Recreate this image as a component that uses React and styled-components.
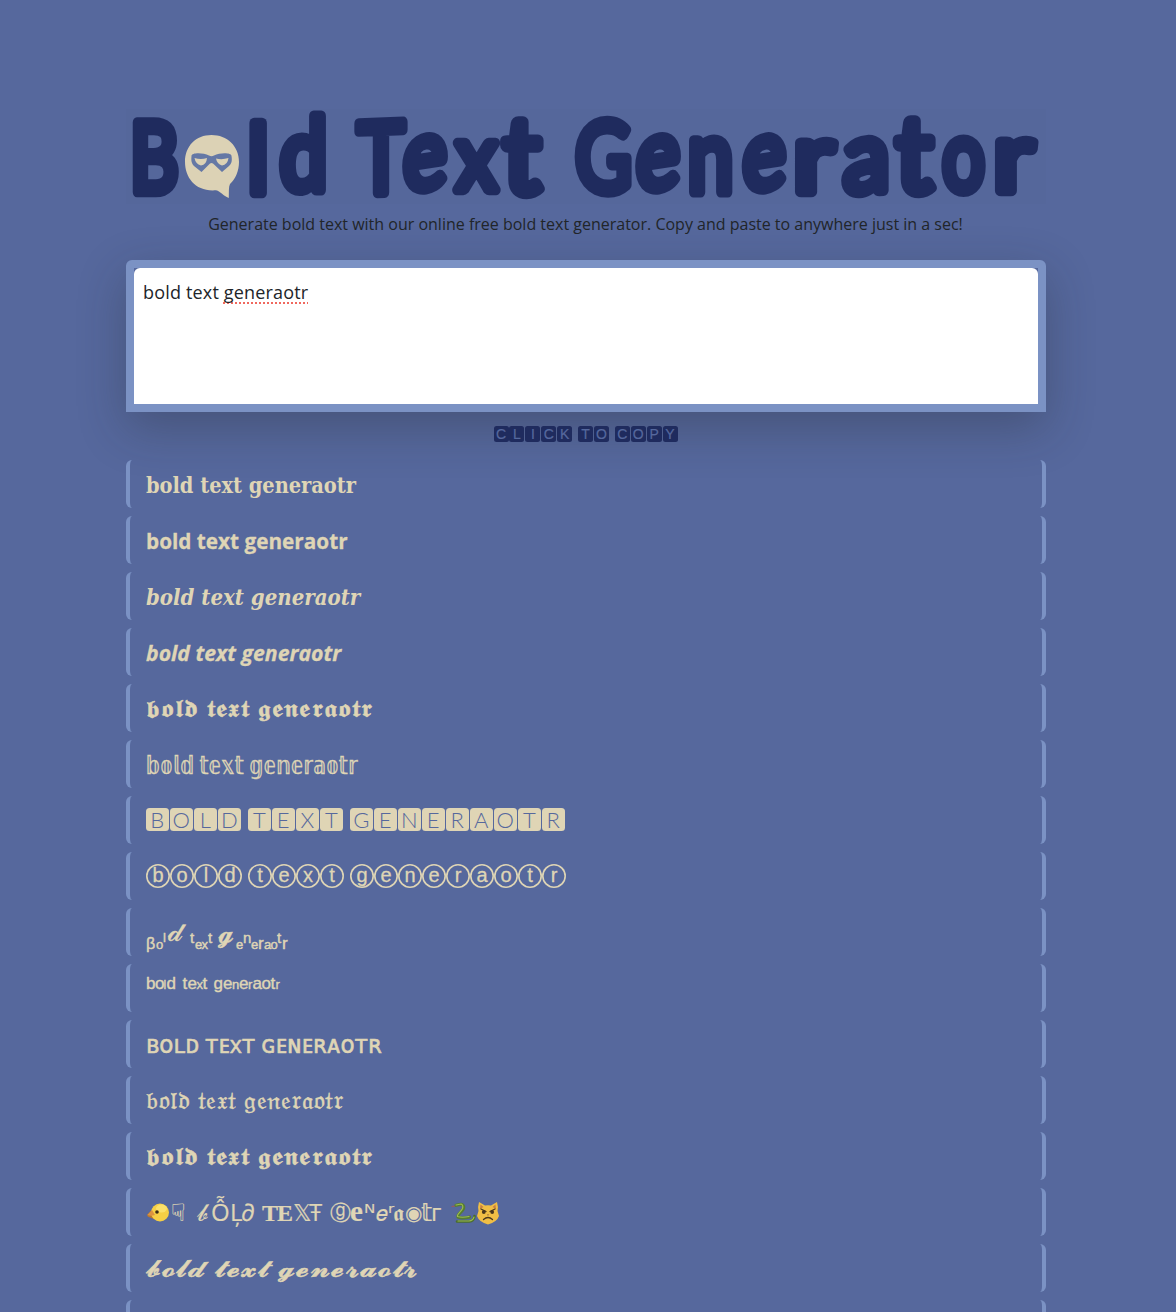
import React from "react";
import styled, { createGlobalStyle } from "styled-components";

const GlobalStyle = createGlobalStyle`
  * { box-sizing: border-box; }
  html, body { margin: 0; padding: 0; }
  body {
    background: #56689d;
    font-family: "Open Sans", "Noto Sans", "DejaVu Sans", sans-serif;
    height: 1312px;
    overflow: hidden;
  }
`;

const Page = styled.main`
  width: 920px;
  margin: 0 0 0 126px;
  padding-top: 109px;
`;

const Banner = styled.h1`
  margin: 0;
  height: 95px;
  background: #55679b;
`;

const BannerArt = styled.svg`
  display: block;
  overflow: visible;
`;

const Tagline = styled.p`
  margin: 8px 1px 0 0;
  height: 24px;
  line-height: 24px;
  font-size: 16px;
  text-align: center;
  color: #212529;
  white-space: nowrap;
`;

const InputFrame = styled.div`
  height: 152px;
  margin-top: 24px;
  border: 8px solid #7b92c4;
  border-radius: 6px 6px 0 0;
  box-shadow: 0 16px 48px rgba(33, 37, 41, 0.3);
`;

const InputArea = styled.div`
  height: 136px;
  padding: 11px 9px;
  background: #fff;
  border-radius: 6px 6px 0 0;
  font-size: 18px;
  letter-spacing: 0.17px;
  line-height: 27px;
  color: #212529;
`;

const Misspelled = styled.span`
  text-decoration: underline dotted #f0685e 2px;
  text-decoration-skip-ink: none;
  text-underline-offset: 3px;
`;

const Hint = styled.div`
  display: flex;
  justify-content: center;
  gap: 5px;
  height: 48px;
  padding-top: 14px;
`;

const Word = styled.span`
  display: flex;
`;

const HintTile = styled.span`
  width: 15px;
  height: 16px;
  margin-right: 0.9px;
  border-radius: 2.5px;
  background: #1f2b5e;
  color: #56689d;
  font: 400 14px/16px "Liberation Sans", sans-serif;
  -webkit-text-stroke: 0.2px #56689d;
  text-align: center;
`;

const List = styled.div`
  display: flex;
  flex-direction: column;
  gap: 8px;
`;

const Row = styled.div`
  height: 48px;
  flex: none;
  padding: 0 16px;
  border: solid #7b92c4;
  border-width: 0 4px;
  border-radius: 6px;
  display: flex;
  align-items: flex-start;
`;

const Sample = styled.span`
  display: block;
  white-space: pre;
  color: #dfd5b5;
  line-height: 48px;
  font-family: ${(p) => p.$font || '"Open Sans", "DejaVu Sans", sans-serif'};
  font-size: ${(p) => p.$size || 24}px;
  font-weight: ${(p) => p.$weight || 400};
  font-style: ${(p) => (p.$italic ? "italic" : "normal")};
  letter-spacing: ${(p) => p.$track || 0}px;
  margin-top: ${(p) => p.$drop || 0}px;
  -webkit-text-stroke: ${(p) => p.$stroke || 0}px #dfd5b5;
  transform: scaleX(${(p) => p.$stretch || 1});
  transform-origin: left center;
`;

const Part = styled.span`
  display: inline-block;
  line-height: 1;
  width: ${(p) => p.$width}px;
  font-size: ${(p) => p.$size}px;
  vertical-align: ${(p) => p.$rise}px;
  ${(p) => p.$serif && 'font-family: "Liberation Serif", serif; font-weight: 700;'}
`;

const Emoji = styled.svg`
  width: 24px;
  height: 24px;
  overflow: visible;
`;

const TileLine = styled.div`
  display: flex;
  gap: 6px;
  padding-top: 12px;
`;

const SquareTile = styled.span`
  width: 22.5px;
  height: 22.5px;
  margin-right: 1.5px;
  border-radius: 3.5px;
  background: #dfd5b5;
  color: #56689d;
  font: 300 22px/23px Lato, sans-serif;
  text-align: center;
`;

const RoundTile = styled.span`
  width: 24px;
  height: 24px;
  box-shadow: inset 0 0 0 1.6px #dfd5b5;
  border-radius: 50%;
  color: #dfd5b5;
  font: 400 20px/22px "Liberation Sans", sans-serif;
  -webkit-text-stroke: 0.3px #dfd5b5;
  text-align: center;
`;

/* glyph, left, top, right, bottom, slant of the horizontals in degrees */
const LETTERS = [
  ["B", 132.5, 115, 179, 197, 0],
  ["l", 249, 117, 267.5, 198, 0],
  ["d", 278.5, 110.5, 326, 197, 0],
  ["T", 354, 116, 408, 198, -2],
  ["e", 402, 132, 448, 195, -9],
  ["x", 452, 136, 501, 195, 0],
  ["t", 500, 116, 545, 199.5, 0],
  ["G", 574, 115, 632, 198, 0],
  ["e", 635, 132, 681, 195, -9],
  ["n", 689, 134, 733, 198, 0],
  ["e", 741.5, 132, 787, 195, -9],
  ["r", 795, 136, 839.5, 197, 0],
  ["a", 841, 133.5, 889.5, 198, -3],
  ["t", 892.5, 116, 937, 199, 0],
  ["o", 941, 133, 986, 197.5, 0],
  ["r", 995, 136, 1039, 196.5, 0],
];

const STROKE = 11;
const pen = document.createElement("canvas").getContext("2d");

function glyphTransform([char, left, top, right, bottom, slant]) {
  pen.font = "400 100px Lato";
  const m = pen.measureText(char);
  const x = -m.actualBoundingBoxLeft;
  const w = m.actualBoundingBoxRight - x;
  const h = m.actualBoundingBoxAscent + m.actualBoundingBoxDescent;
  const sx = (right - left) / (w + STROKE);
  const sy = (bottom - top) / (h + STROKE);
  const tx = left - 126 + (STROKE / 2 - x) * sx;
  const ty = top - 109 + (STROKE / 2 + m.actualBoundingBoxAscent) * sy;
  const cx = (left + right) / 2 - 126;
  return `translate(${cx} 0) skewY(${slant}) translate(${tx - cx} ${ty}) scale(${sx} ${sy})`;
}

const LogoLetter = styled.text`
  font: 400 100px Lato, sans-serif;
  fill: #1f2b5e;
  stroke: #1f2b5e;
  stroke-width: ${STROKE}px;
  stroke-linejoin: round;
`;

function Logo() {
  return (
    <BannerArt width="920" height="95" viewBox="0 0 920 95">
      {LETTERS.map((l, i) => (
        <LogoLetter key={i} transform={glyphTransform(l)}>{l[0]}</LogoLetter>
      ))}
      <path fill="#dcd2b5" d="M85.5 26C101 26 113 37 113 53C113 62 109.500 70 104 75C102.500 78 103 83 102.800 89C97 87 95 82.500 90 81.300C70 83 59 69 59 53C59 37 70 26 85.500 26Z" />
      <path fill="#6578a5" d="M65.500 47C65.500 43.500 77 43.500 83 46.500Q85.500 48 88 46.500C94 43.500 105.500 43.500 105.500 47C106.500 53 105 55 103 57L96 63L87 54.500Q85.500 53.500 84 54.500L75.500 63L68 57C65.500 54 65 52 65.500 47Z" />
      <path fill="#dcd2b5" d="M68.500 49Q75 51 81 49Q80.500 56 75 56.500Q69.500 55 68.500 49ZM90 49.500Q96 51 102.500 49Q101.500 56 96 56.500Q91 55 90 49.500Z" />
    </BannerArt>
  );
}

const Chick = () => (
  <Emoji viewBox="0 0 24 24">
    <path d="M5 9.500L1 14Q1.500 16 4 16.500L8 18L9 12Z" fill="#b9782f" />
    <circle cx="14" cy="11.500" r="9" fill="#f6cf45" />
    <ellipse cx="15.500" cy="7.500" rx="5.500" ry="4" fill="#fbe06a" />
    <path d="M6 9L1.500 14Q5 15.500 9 14Z" fill="#dc9340" />
    <circle cx="11" cy="11" r="1.800" fill="#3a2a16" />
  </Emoji>
);

const Snake = () => (
  <Emoji viewBox="0 0 24 24" fill="none" strokeLinecap="round" strokeLinejoin="round">
    <path d="M3 5L0 5.500" stroke="#b5524a" strokeWidth=".8" />
    <path d="M5 20.500H17Q22 20 22.500 15" stroke="#4a6d2b" strokeWidth="2.600" />
    <path d="M4 4.300L9 3.300Q12.500 4 11.500 7.500C10 11 5 13 6 16Q10 18 17.500 16" stroke="#567d30" strokeWidth="3.200" />
    <path d="M4 4L9 3Q11.500 4 10.500 7.500C9 11 4.500 13 5.500 15.500Q10 17 17 15.500M6 20H17Q21 19.500 22 16" stroke="#9aba50" strokeWidth="1.200" />
  </Emoji>
);

const Cat = () => (
  <Emoji viewBox="0 0 24 24">
    <path d="M3 1L9 4.500Q12 4 15 4.500L21 1Q22.500 6 21.500 10L23 15Q21 21 12 23.500Q3 21 1 15L2.500 10Q1.500 6 3 1Z" fill="#f0be45" />
    <path d="M4.500 3.500L7.500 6L4 8ZM19.500 3.500L16.500 6L20 8Z" fill="#c98043" />
    <circle cx="7.800" cy="11" r="1.900" fill="#49371d" />
    <circle cx="16.200" cy="11" r="1.900" fill="#49371d" />
    <path d="M5 8L10 10.500M19 8L14 10.500M7.500 18.500Q12 14.500 16.500 18.500" fill="none" stroke="#49371d" strokeWidth="1.300" strokeLinecap="round" />
    <path d="M10.800 13.500H13.200L12 14.700Z" fill="#8a5a35" />
  </Emoji>
);

const alphabet = (base) =>
  "bold text generaotr".replace(/[a-z]/g, (c) => String.fromCodePoint(base + c.charCodeAt(0) - 97));

const SANS = '"Liberation Sans", "DejaVu Sans", sans-serif';
const SERIF = '"DejaVu Serif Condensed", "DejaVu Serif", serif';

const SAMPLES = [
  { text: "bold text generaotr", font: SERIF, weight: 700, size: 22, stretch: 0.98, drop: 1 },
  { text: "bold text generaotr", weight: 700, size: 22, stretch: 0.943, stroke: 0.3 },
  { text: "bold text generaotr", font: SERIF, weight: 700, italic: true, size: 22, stretch: 1, drop: 1 },
  { text: "bold text generaotr", weight: 700, italic: true, size: 22, stretch: 0.965, stroke: 0.3 },
  { text: alphabet(0x1d586), stretch: 1.14, track: 1, stroke: 0.5 },
  { text: alphabet(0x1d552), stretch: 0.84, stroke: 0.3, drop: 1 },
  { tiles: "square" },
  { tiles: "round" },
  {
    font: SANS, stroke: 0.45, size: 16, drop: 3,
    parts: [
      ["β", 16, -9, 10], ["o", 13, -9, 7], ["l", 13, -2, 5], ["𝒹", 27, -1, 17], [" ", 16, 0, 5],
      ["t", 15, -3, 5], ["e", 13, -9, 6.5], ["x", 13, -9, 6.5], ["t", 15, -3, 5], [" ", 16, 0, 5],
      ["𝓰", 27, -2, 18], ["e", 13, -9, 7], ["n", 15, -3, 8], ["e", 13, -9, 7], ["r", 17, -9, 6],
      ["a", 13, -9, 6.5], ["o", 13, -9, 6.5], ["t", 15, -3, 5], ["r", 17, -9, 6],
    ],
  },
  {
    font: SANS, stroke: 0.4, size: 16, drop: -4,
    parts: [
      ["b", 17, 0, 9], ["o", 17, 0, 8.5], ["l", 12, 0, 3], ["d", 17, 0, 10], [" ", 17, 0, 6],
      ["t", 17, 0, 5], ["e", 17, 0, 9], ["x", 13, 0, 6], ["t", 17, 0, 5], [" ", 17, 0, 6],
      ["g", 17, 0, 9.5], ["e", 17, 0, 9], ["n", 13, 0, 7], ["e", 17, 0, 9], ["r", 13, 0, 4.5],
      ["a", 17, 0, 9], ["o", 17, 0, 9], ["t", 17, 0, 5], ["r", 13, 0, 5],
    ],
  },
  { text: "ʙᴏʟᴅ ᴛᴇxᴛ ɢᴇɴᴇʀᴀᴏᴛʀ", stretch: 0.96, stroke: 0.6 },
  { text: alphabet(0x1d51e), stretch: 1.09, track: 0.65, stroke: 0.4 },
  { text: alphabet(0x1d586), stretch: 1.14, track: 1, stroke: 0.5 },
  {
    stroke: 0.2,
    parts: [
      [<Chick />, 24, -4, 25], ["☟", 24, 0, 26], ["𝒷", 24, 0, 14], ["Ỗ", 24, 0, 19], ["Ļ", 24, 0, 11],
      ["∂", 24, 0, 21], ["T", 24, 0, 15, true], ["E", 24, 0, 16, true], ["𝕏", 23, 0, 16], ["Ŧ", 24, 0, 21],
      ["ⓖ", 21, 1, 20], ["e", 29, 0, 14, true], ["ᴺ", 24, 0, 12], ["𝑒", 22, 0, 12], ["ʳ", 24, 0, 5],
      ["𝖆", 23, 0, 12], ["◉", 20, 1, 16], ["𝕥", 24, 0, 10], ["г", 24, 0, 21],
      [<Snake />, 24, -4, 24], [<Cat />, 24, -4, 24],
    ],
  },
  { text: alphabet(0x1d4ea), stretch: 1.22, track: 0.8, stroke: 0.5 },
];

function Tiles({ text, as: Tile }) {
  return text.split(" ").map((word, i) => (
    <Word key={i}>
      {[...word].map((c, j) => <Tile key={j}>{c}</Tile>)}
    </Word>
  ));
}

function StyledSample({ s }) {
  return (
    <Sample
      $font={s.font} $size={s.size} $track={s.track} $drop={s.drop}
      $weight={s.weight} $italic={s.italic} $stroke={s.stroke} $stretch={s.stretch}
    >
      {s.text || s.parts.map(([c, size, rise, width, serif], i) => (
        <Part key={i} $size={size} $rise={rise} $width={width} $serif={serif}>{c}</Part>
      ))}
    </Sample>
  );
}

export default function App() {
  return (
    <>
      <GlobalStyle />
      <Page>
        <Banner><Logo /></Banner>
        <Tagline>
          Generate bold text with our online free bold text generator. Copy and paste to anywhere just in a sec!
        </Tagline>
        <InputFrame>
          <InputArea>bold text <Misspelled>generaotr</Misspelled></InputArea>
        </InputFrame>
        <Hint><Tiles text="CLICK TO COPY" as={HintTile} /></Hint>
        <List>
          {SAMPLES.map((s, i) => (
            <Row key={i}>
              {s.tiles === "square" && <TileLine><Tiles text="BOLD TEXT GENERAOTR" as={SquareTile} /></TileLine>}
              {s.tiles === "round" && <TileLine><Tiles text="bold text generaotr" as={RoundTile} /></TileLine>}
              {!s.tiles && <StyledSample s={s} />}
            </Row>
          ))}
          <Row />
        </List>
      </Page>
    </>
  );
}
